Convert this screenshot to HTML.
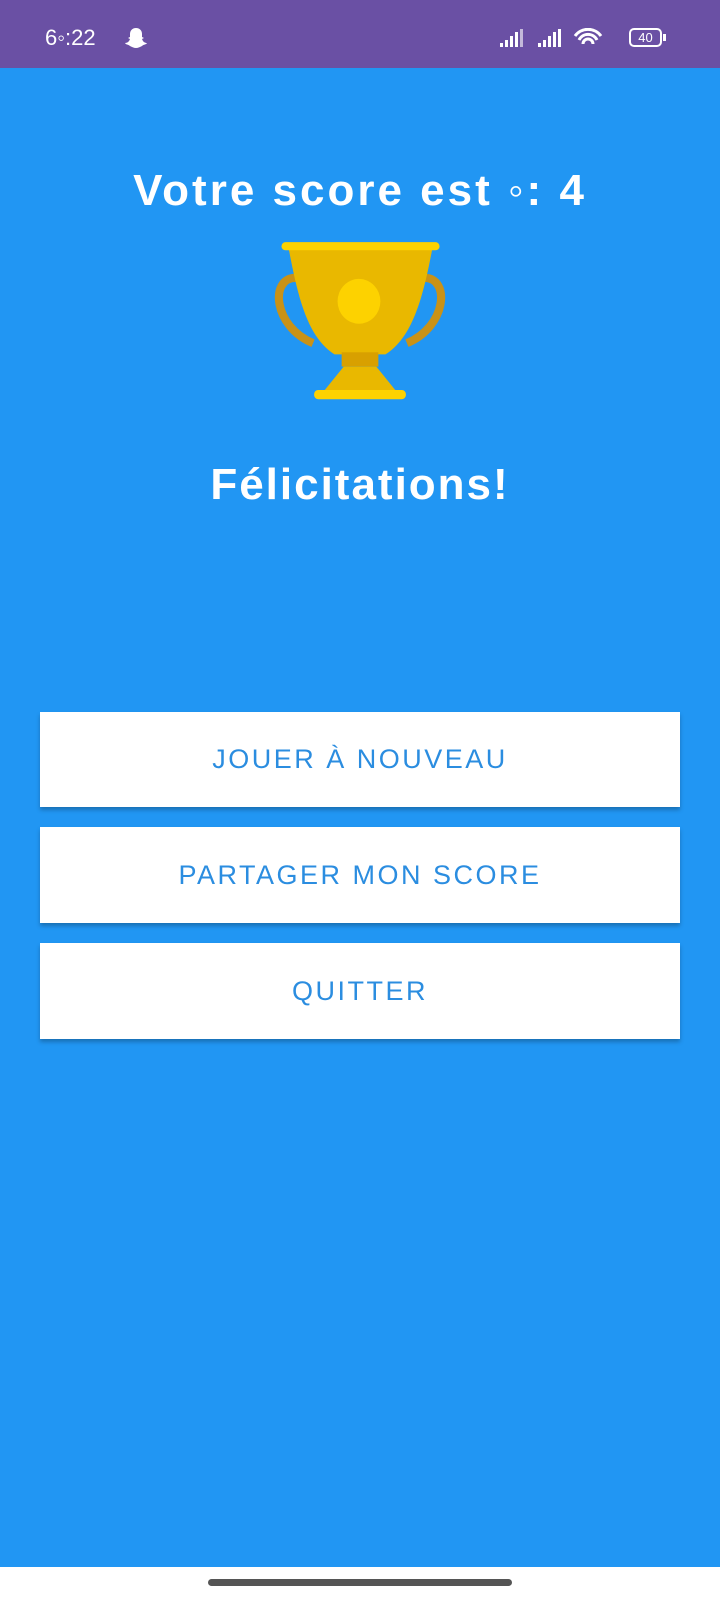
<!DOCTYPE html>
<html><head><meta charset="utf-8"><style>
*{margin:0;padding:0;box-sizing:border-box}
body{width:720px;height:1600px;background:#2196F3;font-family:"Liberation Sans",sans-serif;position:relative;overflow:hidden}
.sb{position:absolute;left:0;top:0;width:720px;height:68px;background:#6a50a4;color:#fff}
.t{position:absolute;color:#fff;font-weight:bold;text-align:center;width:720px;left:0}
.btn{position:absolute;left:40px;width:640px;background:#fff;color:#2b8de0;font-size:27px;letter-spacing:2.5px;text-align:center;box-shadow:0 3px 4px rgba(0,0,0,.25)}
</style></head><body>
<div class="sb">
<div style="position:absolute;left:45px;top:25px;font-size:22px">6◦:22</div>
<svg style="position:absolute;left:124px;top:26px" width="24" height="24" viewBox="0 0 24 24"><path d="M12 2c4 0 6 3 6 6v3l2 1-2 1c1 3 3 4 5 4-1 2-3 1-5 3-2 1-4 2-6 2s-4-1-6-2c-2-2-4-1-5-3 2 0 4-1 5-4l-2-1 2-1V8c0-3 2-6 6-6z" fill="#fff"/></svg>
<svg style="position:absolute;left:500px;top:28px" width="130" height="22" viewBox="0 0 130 22">
<g fill="#fff"><rect x="0" y="15" width="3" height="4"/><rect x="5" y="12" width="3" height="7"/><rect x="10" y="8" width="3" height="11"/><rect x="15" y="4" width="3" height="15"/><rect x="20" y="1" width="3" height="18" opacity=".6"/>
<rect x="38" y="15" width="3" height="4"/><rect x="43" y="12" width="3" height="7"/><rect x="48" y="8" width="3" height="11"/><rect x="53" y="4" width="3" height="15"/><rect x="58" y="1" width="3" height="18"/></g>
<path d="M75 8a16 16 0 0 1 26 0M79 12a10 10 0 0 1 18 0M83 16a4 4 0 0 1 10 0" stroke="#fff" stroke-width="3" fill="none"/></svg>
<div style="position:absolute;left:629px;top:28px;width:33px;height:19px;border:2px solid #fff;border-radius:5px;font-size:13px;text-align:center;line-height:15px">40</div>
<div style="position:absolute;left:663px;top:34px;width:3px;height:7px;background:#fff"></div>
</div>
<div class="t" style="top:166px;font-size:44px;letter-spacing:3px">Votre score est ◦: 4</div>
<svg style="position:absolute;left:0;top:0" width="720" height="1600" viewBox="0 0 706 1568">
<path d="M290 272C264 272 268 320 307 336M416 272C442 272 438 320 399 336" stroke="#c99217" stroke-width="8" fill="none"/>
<path d="M283 243L424 243C415 290 405 330 378 347L328 347C301 330 292 290 283 243Z" fill="#e9b800"/>
<ellipse cx="352" cy="295" rx="21" ry="22" fill="#fdd200"/>
<rect x="335" y="345" width="36" height="14" fill="#d8a000"/>
<path d="M337 359L369 359L390 385L316 385Z" fill="#e9b800"/>
<rect x="308" y="382" width="90" height="9" rx="4" fill="#fdd200"/>
<rect x="276" y="237" width="155" height="8" rx="4" fill="#fdd200"/>
</svg>
<div class="t" style="top:460px;font-size:44px;letter-spacing:2px">Félicitations!</div>
<div class="btn" style="top:712px;height:95px;line-height:95px">JOUER À NOUVEAU</div>
<div class="btn" style="top:827px;height:96px;line-height:96px">PARTAGER MON SCORE</div>
<div class="btn" style="top:943px;height:96px;line-height:96px">QUITTER</div>
<div style="position:absolute;left:0;top:1567px;width:720px;height:33px;background:#fff"></div>
<div style="position:absolute;left:208px;top:1579px;width:304px;height:7px;border-radius:4px;background:#555"></div>
</body></html>
